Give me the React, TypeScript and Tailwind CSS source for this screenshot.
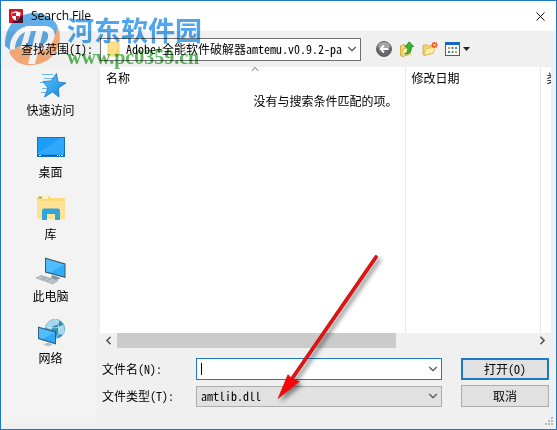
import React, { useState } from 'react';
import { ChevronDown, ChevronLeft, ChevronRight, ChevronUp, X } from 'lucide-react';

const uiFont = "font-['Open_Sans','Noto_Sans_CJK_SC',sans-serif]";
const monoFont = "font-['Noto_Sans_Mono_CJK_SC','Liberation_Mono','Noto_Sans_CJK_SC',monospace]";

function ShieldIcon() {
  return (
    <svg width="14" height="14" viewBox="0 0 14 14" aria-hidden="true">
      <rect width="14" height="14" fill="#d81428" />
      <path d="M7 2c1.500 1 3 1.300 4.500 1.300 0 4-.8 7-4.500 8.700C3.300 10.300 2.500 7.300 2.500 3.300 4 3.300 5.500 3 7 2z" fill="#fff" />
      <path d="M7 3.500v3.500H3.300C3 6 3 5 3 4.200 4.500 4.200 6 4 7 3.500zM7 7h3.600c-.6 2-1.600 3.200-3.600 4.200z" fill="#d81428" />
    </svg>
  );
}

function StarIcon() {
  return (
    <svg width="32" height="32" viewBox="0 0 32 32" aria-hidden="true">
      <defs>
        <linearGradient id="star" x1="0" y1="0" x2="1" y2="1">
          <stop offset="0" stopColor="#5cc8fb" />
          <stop offset="1" stopColor="#1583dc" />
        </linearGradient>
      </defs>
      <path d="M7 5.500h11M9 9.500h9M5 13.500h9M7 19.500h6M6 23.500h6" stroke="#6db9e8" strokeWidth="1" fill="none" />
      <path d="M21.500 4.500l1.500 8.500 8 1-7.500 5 .5 9-6.500-5-8 5 3.500-9-5-6.500 8-.5z" fill="url(#star)" stroke="#1778c4" strokeWidth=".8" />
    </svg>
  );
}

function DesktopIcon() {
  return (
    <svg width="32" height="32" viewBox="0 0 32 32" aria-hidden="true">
      <rect x="2.500" y="6.500" width="27" height="19" fill="#1c9cf5" stroke="#1672b4" />
      <path d="M3 22L25 7h4v16H3z" fill="#42b0fb" opacity=".55" />
      <path d="M3 24.500h26" stroke="#0b5896" />
      <path d="M4 24.500h2M22 24.500h1M24 24.500h1M26 24.500h2" stroke="#fff" />
    </svg>
  );
}

function LibraryIcon() {
  return (
    <svg width="32" height="32" viewBox="0 0 32 32" aria-hidden="true">
      <path d="M2 5l1-2h11l1.500 2H29l1 1v20H2z" fill="#fbd977" />
      <path d="M2 8h28v18H2z" fill="#fde293" />
      <path d="M4 4.500h9" stroke="#fff" strokeWidth="2" />
      <path d="M4 4.500h3" stroke="#7cb567" strokeWidth="2" />
      <path d="M7 27V17l1.500-1.500h15L25 17v10h-5v-6h-8v6z" fill="#2fa5da" />
    </svg>
  );
}

function ComputerIcon() {
  return (
    <svg width="32" height="32" viewBox="0 0 32 32" aria-hidden="true">
      <path d="M10 2.500l20.500 6v14.500L10 17.500z" fill="#3f5769" />
      <path d="M11 4l18.500 5.500v12L11 16.500z" fill="#30adfa" />
      <path d="M11 4l18.500 5.500-14 8-4.500-1z" fill="#67c7fc" opacity=".6" />
      <path d="M17 20l5 1.500 4 2-5 1.500-5-2z" fill="#8a969e" />
      <path d="M1 23l5-2.500 17 5-5 3.500z" fill="#cdd4d8" stroke="#8c969c" strokeWidth=".6" />
      <path d="M4 22.500l14.500 5M6 21.500l15 5M7 25l4-3M11 26.500l4-3" stroke="#8b959b" strokeWidth=".6" />
    </svg>
  );
}

function NetworkIcon() {
  return (
    <svg width="32" height="32" viewBox="0 0 32 32" aria-hidden="true">
      <circle cx="20" cy="12" r="10" fill="#358fb9" />
      <path d="M12 6c3-4 9-5 13-2l-3 4-4 1-2 4-5-2zM23 11l5-3c2 3 2 7 0 10l-4-1z" fill="#a4d8e9" />
      <path d="M20 2c5 5 5 14 1 20M11 9c6 3 13 2 18-1" stroke="#d7eef5" strokeWidth=".7" fill="none" />
      <path d="M3 9.500l18 5v13L3 22z" fill="#35617d" />
      <path d="M4 11l16 4.500v10.500L4 21z" fill="#2faafa" />
      <path d="M4 11l16 4.500L8 22l-4-1z" fill="#68c8fd" opacity=".6" />
      <path d="M8 27.500l5-2 5 2-5 2z" fill="#b7c2c8" />
    </svg>
  );
}

function BackIcon() {
  return (
    <svg width="16" height="16" viewBox="0 0 16 16" aria-hidden="true">
      <circle cx="8" cy="8" r="7.500" fill="#6a6a6a" stroke="#4a4a4a" strokeWidth=".8" />
      <path d="M1.500 6a6.700 6.700 0 0113 0c-4 2-9 2-13 0z" fill="#a5a5a5" />
      <path d="M12.500 8H4.500M8 4.500L4.500 8 8 11.500" stroke="#fff" strokeWidth="1.800" fill="none" />
    </svg>
  );
}

function UpFolderIcon() {
  return (
    <svg width="16" height="16" viewBox="0 0 16 16" aria-hidden="true">
      <path d="M1.500 5l4-1.500 1 1.500 5-1v9l-8 2.500-2-1z" fill="#f8d66d" stroke="#c99a2d" strokeWidth=".8" />
      <path d="M4 8l9-2-2 7-7.500 2.500z" fill="#ffec9c" stroke="#d6aa3a" strokeWidth=".6" />
      <path d="M5.500 13c3-1 3.500-3.500 3-7H6L10.200.8l4.600 4.700-2.600.4c.5 4.500-2 7.500-6.700 7.100z" fill="#35b63b" stroke="#187d26" strokeWidth=".7" />
    </svg>
  );
}

function NewFolderIcon() {
  return (
    <svg width="16" height="16" viewBox="0 0 16 16" aria-hidden="true">
      <path d="M1 4.500l4-1 1.500 1.500 5-.5V12L2 14.500 1 13z" fill="#f7d36c" stroke="#d0a03c" strokeWidth=".8" />
      <path d="M4 7.500l9.500-1L11 12l-9 2.500z" fill="#fff0a6" stroke="#d9ad43" strokeWidth=".6" />
      <path d="M12.500 1v6M9.500 4h6M10.300 1.800l4.400 4.400M14.700 1.800l-4.400 4.400" stroke="#ee4a28" strokeWidth="1.300" />
      <circle cx="12.500" cy="4" r="1.200" fill="#ffe17b" />
    </svg>
  );
}

function ViewMenuIcon() {
  return (
    <svg width="26" height="16" viewBox="0 0 26 16" aria-hidden="true">
      <rect x=".5" y="1.500" width="14" height="13" fill="#fff" stroke="#1567c5" />
      <path d="M0 2.500h15" stroke="#1567c5" strokeWidth="3" />
      <path d="M3 7h2M10 11h2" stroke="#e2933b" strokeWidth="2" />
      <path d="M6.500 7h2M3 11h2" stroke="#3b7fc4" strokeWidth="2" />
      <path d="M10 7h2M6.500 11h2" stroke="#4c9d68" strokeWidth="2" />
      <path d="M18 6h7l-3.500 4z" fill="#222" />
    </svg>
  );
}

function Watermark() {
  return (
    <div className="pointer-events-none absolute left-1 top-3 flex gap-1.5 opacity-85 mix-blend-multiply">
      <svg width="56" height="54" viewBox="0 0 56 54" aria-hidden="true">
        <path d="M0 33C-1 13 13 0 29 0c11 0 19 5 23 12 3 10 0 19-8 26H6z" fill="#45a0e6" />
        <path d="M53 14c7 19-6 37-26 38C16 53 8 48 4 39c4-3 7-5 11-6l25 1c6-5 11-12 13-20z" fill="#ffa564" />
        <path d="M5 37c-1-12 6-21 17-24h17c10 0 13 8 9 15-3 6-7 9-12 10v-5c5-3 8-7 7-12-1-2-3-3-5-3l-8 33h-7l8-33h-5l-5 18h-6l5-17c-6 3-10 9-10 17z" fill="#fff" />
      </svg>
      <div className="flex flex-col whitespace-nowrap">
        <span className="font-['Noto_Sans_CJK_SC',sans-serif] text-[27px] font-bold leading-[34px] text-[#3097ea]">河东软件园</span>
        <span className="font-['Liberation_Serif',serif] text-xl font-bold leading-5 text-[#3dae3d]">www.pc0359.cn</span>
      </div>
    </div>
  );
}

function PointerArrow() {
  return (
    <svg className="pointer-events-none absolute left-[270px] top-[248px]" width="120" height="160" viewBox="0 0 120 160" aria-hidden="true">
      <g className="drop-shadow-[3px_3px_2px_rgba(0,0,0,0.45)]">
        <path d="M105 8L18 134" stroke="#a81414" strokeWidth="3.600" strokeLinecap="round" />
        <path d="M105 8L18 134" stroke="#ea1111" strokeWidth="2.600" strokeLinecap="round" />
        <path d="M7 149.500L17 125.500l4 4.500 7.500 2.500z" fill="#f80505" stroke="#d01313" strokeWidth=".6" />
      </g>
    </svg>
  );
}

const places = [
  { label: '快速访问', icon: <StarIcon /> },
  { label: '桌面', icon: <DesktopIcon /> },
  { label: '库', icon: <LibraryIcon /> },
  { label: '此电脑', icon: <ComputerIcon /> },
  { label: '网络', icon: <NetworkIcon /> },
];

const tools = [
  { label: '后退', icon: <BackIcon /> },
  { label: '向上一级', icon: <UpFolderIcon /> },
  { label: '新建文件夹', icon: <NewFolderIcon /> },
  { label: '查看', icon: <ViewMenuIcon /> },
];

export default function App() {
  const [fileName, setFileName] = useState('');

  return (
    <div className={`relative flex min-h-screen flex-col border border-[#1b79c5] bg-[#f0f0f0] text-xs text-black ${uiFont}`}>
      {/* Title bar */}
      <header className="flex h-[30px] items-center bg-white pl-2 pr-2">
        <ShieldIcon />
        <h1 className="flex-1 pl-2">Search File</h1>
        <button aria-label="关闭" className="flex">
          <X size={15} strokeWidth={1.500} />
        </button>
      </header>

      {/* Folder lookup row */}
      <div className="flex h-9 items-center pl-5">
        <label htmlFor="lookup" className={`w-[79px] ${monoFont}`}>查找范围(I):</label>
        <div className="grid h-[23px] w-[261px] items-center border border-[#707070] bg-white">
          <select id="lookup" className={`col-start-1 row-start-1 h-full w-full appearance-none pl-[25px] ${monoFont}`}>
            <option>Adobe+全能软件破解器amtemu.v0.9.2-pa</option>
          </select>
          <svg className="pointer-events-none col-start-1 row-start-1 ml-1.5" width="13" height="16" viewBox="0 0 13 16" aria-hidden="true">
            <path d="M1 1h11v14H1z" fill="#fbe08a" stroke="#f0cf6e" />
            <path d="M9 9h3v6H9z" fill="#f5d068" />
          </svg>
          <ChevronDown size={14} className="pointer-events-none col-start-1 row-start-1 mr-px justify-self-end text-[#555]" />
        </div>
        <div className="flex gap-[7px] pl-[15px]">
          {tools.map((tool) => (
            <button key={tool.label} aria-label={tool.label}>{tool.icon}</button>
          ))}
        </div>
      </div>

      <div className="flex flex-1">
        {/* Places bar */}
        <nav className="mb-1.5 ml-px mr-[3px] flex w-[95px] flex-col bg-[#f3f3f3] pl-0.5 pt-0.5">
          {places.map((place) => (
            <button key={place.label} className="flex h-[62px] flex-col items-center gap-0.5">
              {place.icon}
              <span className="leading-4">{place.label}</span>
            </button>
          ))}
        </nav>

        <div className="flex min-w-0 flex-1 flex-col">
          {/* File list */}
          <div className="mr-[5px] flex flex-1 bg-white">
            <table className="w-full table-fixed border-collapse">
              <colgroup>
                <col />
                <col className="w-[135px]" />
                <col className="w-[11px]" />
              </colgroup>
              <thead>
                <tr className="h-6 text-left">
                  <th className="border-r border-[#e8e8e8] p-0 font-normal">
                    <div className="grid h-6 items-center pl-1.5">
                      <span className="col-start-1 row-start-1">名称</span>
                      <ChevronUp size={12} className="col-start-1 row-start-1 -mt-1 self-start justify-self-center text-[#666]" />
                    </div>
                  </th>
                  <th className="border-r border-[#e8e8e8] p-0 pl-1.5 font-normal">修改日期</th>
                  <th className="overflow-hidden whitespace-nowrap p-0 pl-1.5 font-normal">类型</th>
                </tr>
              </thead>
              <tbody>
                <tr className="align-top">
                  <td className="border-r border-[#e8e8e8] p-0 pr-[7px] pt-[3px] text-right">没有与搜索条件匹配的项。</td>
                  <td className="border-r border-[#e8e8e8] p-0" />
                  <td className="p-0" />
                </tr>
              </tbody>
            </table>
          </div>
          <div className="mr-[5px] flex h-[15px] items-center">
            <button aria-label="向左滚动" className="flex w-[17px] justify-center">
              <ChevronLeft size={13} strokeWidth={3} className="text-[#505050]" />
            </button>
            <div className="h-full flex-1">
              <div className="h-full w-[67%] bg-[#cbcbcb]" />
            </div>
            <button aria-label="向右滚动" className="flex w-[17px] justify-center">
              <ChevronRight size={13} strokeWidth={3} className="text-[#505050]" />
            </button>
          </div>

          {/* File name and type */}
          <form
            className={`grid grid-cols-[94px_1fr_107px] items-center gap-y-[5px] pb-[22px] pl-0.5 pr-[7px] pt-2.5 ${monoFont}`}
            onSubmit={(e) => e.preventDefault()}
          >
            <label htmlFor="filename">文件名(N):</label>
            <div className="flex h-[22px] items-center border border-[#1b79c5] bg-white pl-1">
              <span className="h-3 w-px bg-black" />
              <input
                id="filename"
                value={fileName}
                onChange={(e) => setFileName(e.target.value)}
                className="h-full min-w-0 flex-1 pl-px outline-none"
              />
              <button type="button" aria-label="展开" className="mr-px text-[#555]">
                <ChevronDown size={14} />
              </button>
            </div>
            <button type="submit" className="ml-[19px] h-[22px] border-2 border-[#1b79c5] bg-[#e1e1e1]">打开(O)</button>

            <label htmlFor="filetype">文件类型(T):</label>
            <div className="grid h-[21px] items-center border border-[#adadad] bg-[#e1e1e1]">
              <select id="filetype" className="col-start-1 row-start-1 h-full w-full appearance-none pl-1">
                <option>amtlib.dll</option>
              </select>
              <ChevronDown size={14} className="pointer-events-none col-start-1 row-start-1 mr-px justify-self-end text-[#555]" />
            </div>
            <button type="button" className="ml-[19px] h-[22px] border border-[#adadad] bg-[#e1e1e1]">取消</button>
          </form>
        </div>
      </div>

      {/* Resize grip */}
      <svg className="absolute bottom-0.5 right-0.5" width="10" height="10" viewBox="0 0 10 10" aria-hidden="true">
        <path d="M7 1h2M4 4h2M7 4h2M1 7h2M4 7h2M7 7h2" stroke="#b9b9b9" strokeWidth="2" />
      </svg>

      <Watermark />
      <PointerArrow />
    </div>
  );
}
